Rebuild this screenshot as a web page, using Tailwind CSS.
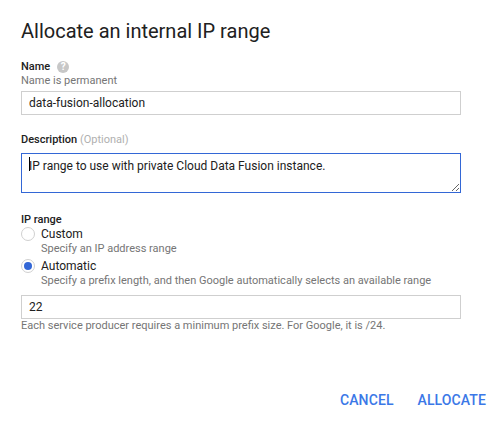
<!DOCTYPE html>
<html lang="en">
<head>
  <meta charset="UTF-8" />
  <meta name="viewport" content="width=device-width, initial-scale=1.0"/>
  <title>Allocate an internal IP range</title>
  <script src="https://cdn.jsdelivr.net/npm/@tailwindcss/browser@4"></script>
</head>

<body class="bg-white font-['Roboto',sans-serif] text-[#212121] w-[504px] h-[422px] overflow-hidden">
  <div class="pl-[21px] pr-[43px] pt-[19px]">
    <h1 class="text-[20px] leading-[24px] font-normal mb-[17px]">Allocate an internal IP range</h1>

    <div class="flex items-center h-[14px]">
      <label class="text-[11px] leading-[14px] font-medium">Name</label>
      <span class="ml-[7px] w-[12px] h-[12px] rounded-full bg-[#c7c7c7] text-white text-[10px] leading-[12px] font-bold text-center">?</span>
    </div>
    <p class="text-[11px] leading-[14px] text-[#757575]">Name is permanent</p>
    <input type="text" value="data-fusion-allocation"
      class="block w-[440px] h-[24px] mt-[3px] px-[7px] border border-[#cfcfcf] text-[12px] text-[#212121] outline-none" />

    <div class="mt-[18px] text-[11px] leading-[14px] font-medium">Description <span class="font-normal text-[#b0b0b0]">(Optional)</span></div>
    <div class="relative mt-[6px] h-[40px]">
      <textarea class="block w-[440px] h-[40px] px-[7px] py-[3px] border border-[#3367d6] text-[12px] leading-[18px] text-[#212121] outline-none">IP range to use with private Cloud Data Fusion instance.</textarea>
      <span class="absolute left-[8px] top-[4px] w-[1px] h-[14px] bg-black"></span>
    </div>

    <div class="mt-[20px] text-[11px] leading-[13px] font-medium">IP range</div>
    <div class="flex items-center gap-[5px] h-[16px]">
      <span class="w-[14px] h-[14px] rounded-full border border-[#d0d0d0] bg-white"></span>
      <span class="text-[12px] leading-[16px] pl-[1px]">Custom</span>
    </div>
    <p class="pl-[20px] text-[11px] leading-[14px] text-[#757575]">Specify an IP address range</p>
    <div class="flex items-center gap-[5px] mt-[2px] h-[16px]">
      <span class="flex items-center justify-center w-[14px] h-[14px] rounded-full border border-[#d0d0d0] bg-white">
        <span class="w-[8px] h-[8px] rounded-full bg-[#3367d6]"></span>
      </span>
      <span class="text-[12px] leading-[16px] pl-[1px]">Automatic</span>
    </div>
    <p class="pl-[20px] text-[11px] leading-[14px] text-[#757575]">Specify a prefix length, and then Google automatically selects an available range</p>

    <input type="text" value="22"
      class="block w-[440px] h-[24px] mt-[7px] px-[7px] border border-[#cfcfcf] text-[12px] text-[#212121] outline-none" />
    <p class="text-[11px] leading-[14px] text-[#757575]">Each service producer requires a minimum prefix size. For Google, it is /24.</p>
  </div>

  <div class="flex justify-end gap-[24px] pr-[18px] mt-[59px]">
    <button class="text-[14px] leading-[16px] font-medium text-[#3b78e7] tracking-[0.1px]">CANCEL</button>
    <button class="text-[14px] leading-[16px] font-medium text-[#3b78e7] tracking-[0.1px]">ALLOCATE</button>
  </div>
</body>
</html>
